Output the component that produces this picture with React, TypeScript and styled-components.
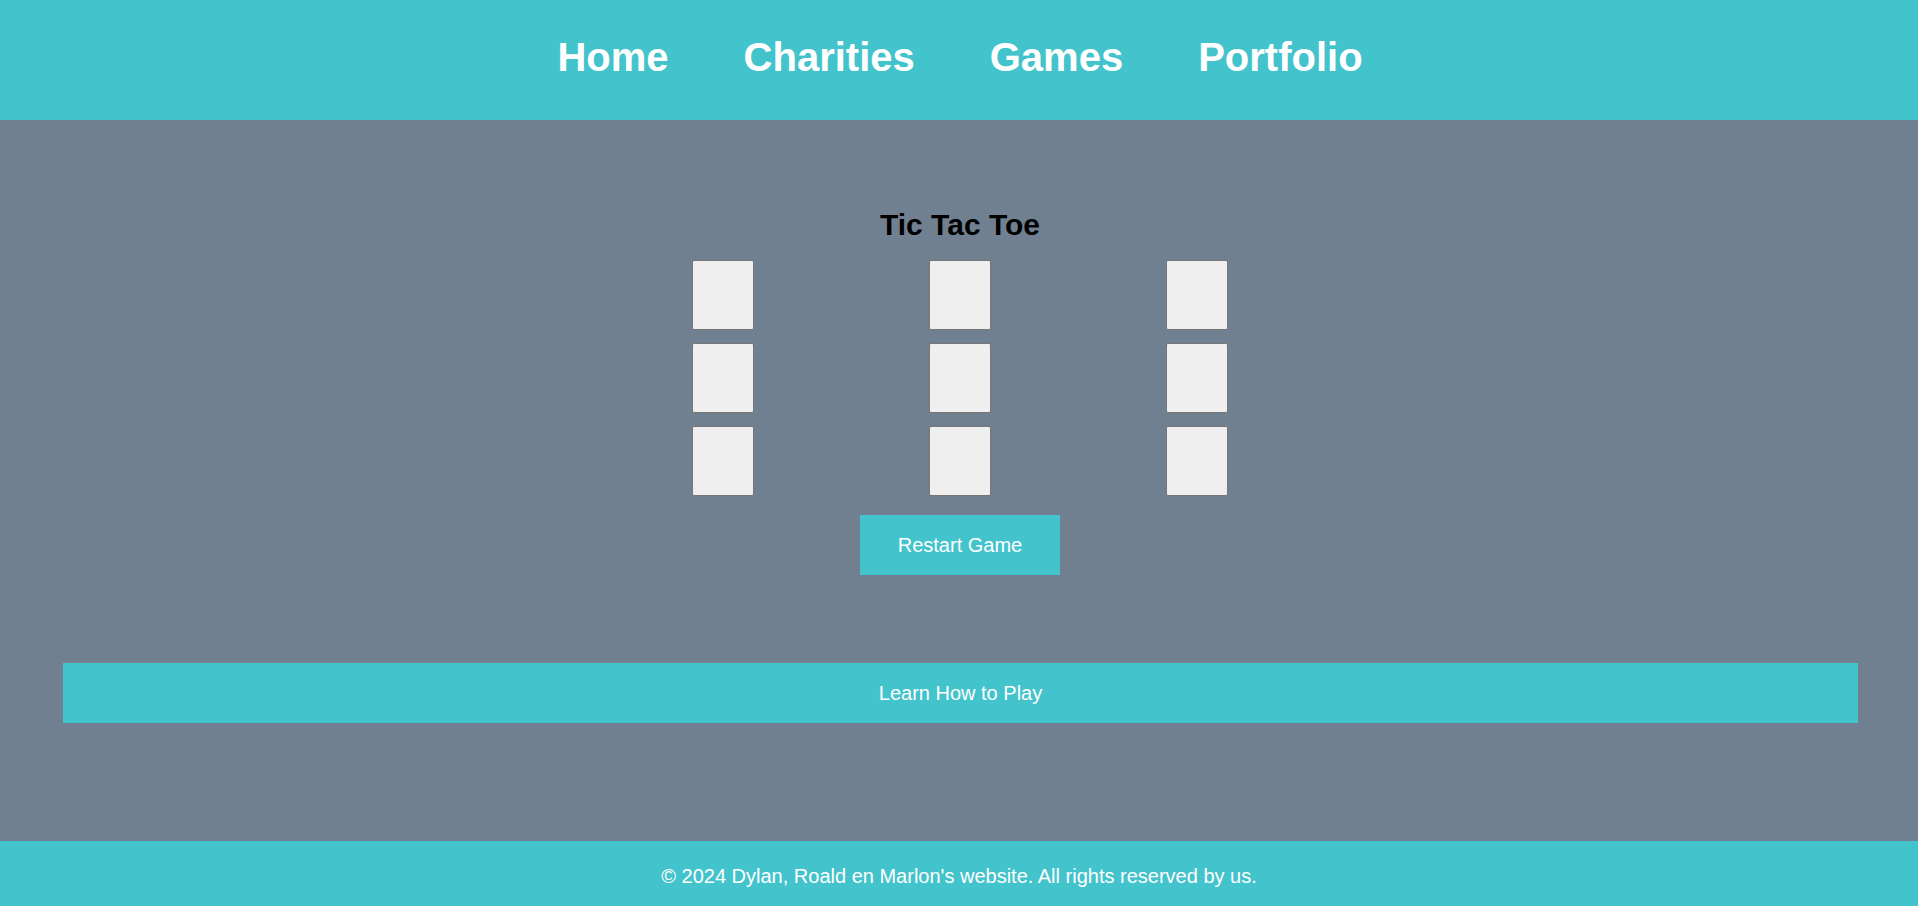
import styled, { createGlobalStyle } from 'styled-components'

const colors = {
  cyan: '#43c3cc',
  slate: '#708090',
  white: '#ffffff',
  cell: '#efefef',
}

const GlobalStyle = createGlobalStyle`
  html, body {
    margin: 0;
    padding: 0;
    font-family: "Liberation Sans", Arial, sans-serif;
    background-color: ${colors.slate};
  }
  * {
    box-sizing: border-box;
  }
`

const links = ['Home', 'Charities', 'Games', 'Portfolio']

const App = () => {
  return (
    <Page>
      <GlobalStyle />
      <Header>
        <Nav>
          {links.map((l) => (
            <NavLink key={l} href='#'>{l}</NavLink>
          ))}
        </Nav>
      </Header>
      <Main>
        <Title>Tic Tac Toe</Title>
        <Board>
          {Array.from({ length: 9 }).map((_, i) => (
            <Cell key={i} />
          ))}
        </Board>
        <RestartButton>Restart Game</RestartButton>
        <LearnBar>Learn How to Play</LearnBar>
      </Main>
      <Footer>© 2024 Dylan, Roald en Marlon's website. All rights reserved by us.</Footer>
    </Page>
  )
}

export default App

const Page = styled.div`
  display: flex;
  flex-direction: column;
  min-height: 100vh;
`

const Header = styled.header`
  background-color: ${colors.cyan};
  height: 120px;
  padding-top: 35px;
`

const Nav = styled.nav`
  display: flex;
  justify-content: center;
  gap: 75px;
  padding-left: 2px;
`

const NavLink = styled.a`
  color: ${colors.white};
  font-size: 40px;
  font-weight: bold;
  text-decoration: none;
`

const Main = styled.main`
  flex: 1;
  display: flex;
  flex-direction: column;
  align-items: center;
  padding-top: 88px;
`

const Title = styled.h1`
  margin: 0 0 18px;
  padding-left: 2px;
  font-size: 30px;
  font-weight: bold;
  color: #000;
`

const Board = styled.div`
  display: grid;
  grid-template-columns: repeat(3, 62px);
  justify-content: space-between;
  row-gap: 13px;
  width: 536px;
  margin-left: 2px;
`

const Cell = styled.button`
  width: 62px;
  height: 70px;
  background-color: ${colors.cell};
  border: 1px solid #767676;
  border-radius: 2px;
  padding: 0;
  cursor: pointer;
`

const RestartButton = styled.button`
  margin: 19px 0 0 2px;
  width: 200px;
  height: 60px;
  border: none;
  background-color: ${colors.cyan};
  color: ${colors.white};
  font-family: "Liberation Sans", Arial, sans-serif;
  font-size: 20px;
  cursor: pointer;
`

const LearnBar = styled.button`
  margin-top: 88px;
  align-self: flex-start;
  margin-left: 63px;
  width: 1795px;
  height: 60px;
  border: none;
  background-color: ${colors.cyan};
  color: ${colors.white};
  font-family: "Liberation Sans", Arial, sans-serif;
  font-size: 20px;
  cursor: pointer;
`

const Footer = styled.footer`
  background-color: ${colors.cyan};
  color: ${colors.white};
  text-align: center;
  font-size: 20px;
  height: 65px;
  padding-top: 24px;
`
